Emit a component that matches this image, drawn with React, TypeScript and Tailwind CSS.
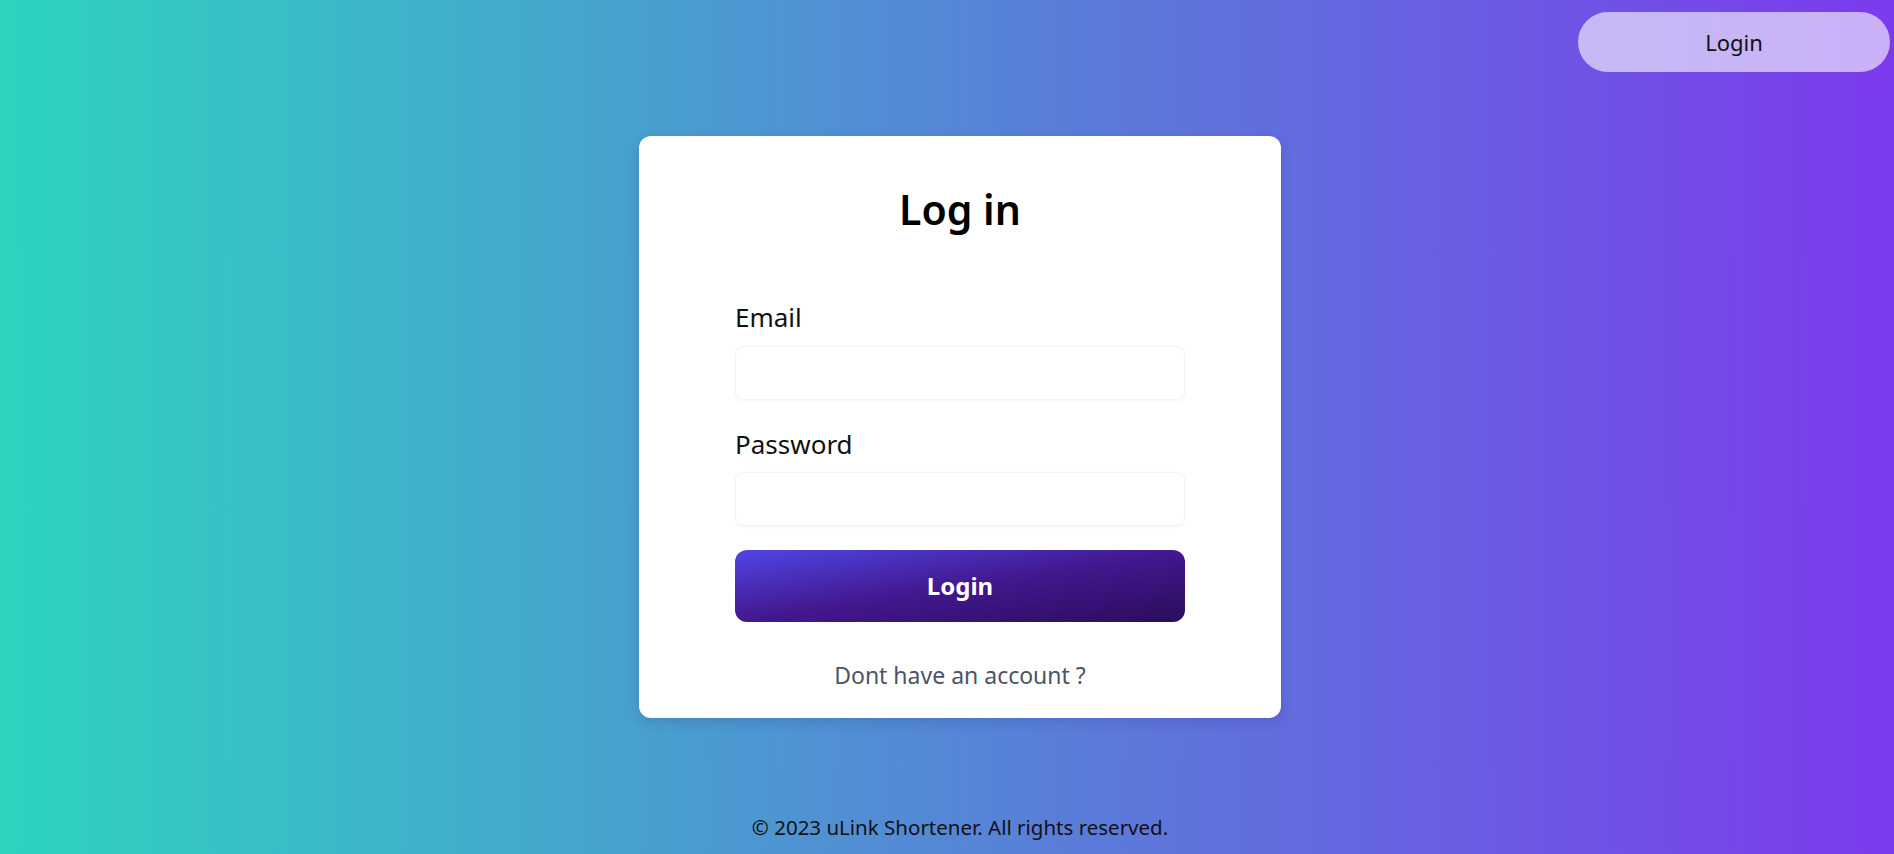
export default function App() {
  return (
    <div
      className="min-h-screen w-full flex flex-col bg-[linear-gradient(to_right,#2dd4bf,#7c3aed)]"
      style={{ fontFamily: "'Noto Sans', 'Open Sans', sans-serif" }}
    >
      {/* Header */}
      <header className="flex justify-end pt-3 pr-1">
        <button className="h-[60px] w-[312px] rounded-full bg-white/60 pb-px text-[22px] leading-none text-[#111]">
          Login
        </button>
      </header>

      {/* Card */}
      <main className="flex justify-center pl-[26px]">
        <div className="mt-[64px] w-[642px] rounded-xl bg-white px-[96px] pt-[53px] pb-[31px] shadow-[0_4px_12px_rgba(40,40,120,0.18)]">
          <h1 className="text-center text-[41px] font-semibold leading-none text-black">Log in</h1>

          <form className="mt-[74px] flex flex-col" onSubmit={(e) => e.preventDefault()}>
            <label className="text-[26px] leading-none text-[#111]">Email</label>
            <input
              type="email"
              className="mt-[16px] h-[54px] w-full rounded-lg border border-gray-100 bg-white px-3 shadow-[0_1px_3px_rgba(0,0,0,0.04)] outline-none"
            />

            <label className="mt-[31px] text-[26px] leading-none text-[#111]">Password</label>
            <input
              type="password"
              className="mt-[15px] h-[54px] w-full rounded-lg border border-gray-100 bg-white px-3 shadow-[0_1px_3px_rgba(0,0,0,0.04)] outline-none"
            />

            <button className="mt-[24px] h-[72px] w-full rounded-xl bg-[linear-gradient(to_bottom_right,#4f46e5,#42188f,#2a0d5c)] text-[24px] font-bold leading-none text-white">
              Login
            </button>
          </form>

          <p className="mt-[42px] text-center text-[23px] leading-none text-[#4b5563]">Dont have an account ?</p>
        </div>
      </main>

      {/* Footer */}
      <footer className="mt-auto pb-[17px] pl-[26px] text-center text-[20.5px] leading-none text-[#111]">
        © 2023 uLink Shortener. All rights reserved.
      </footer>
    </div>
  );
}
